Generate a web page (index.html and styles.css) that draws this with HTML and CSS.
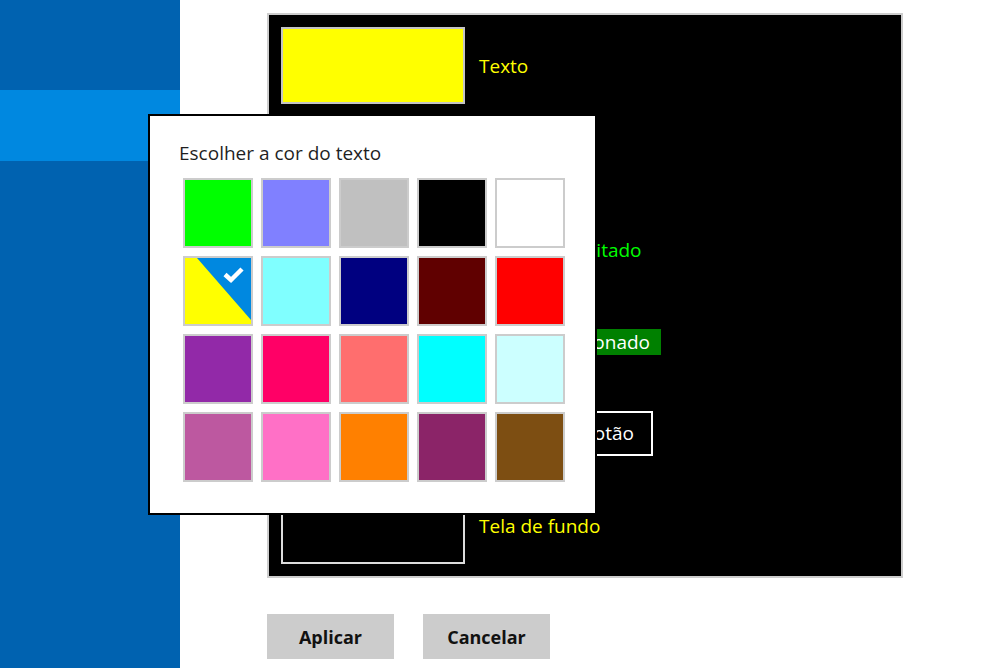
FILE: index.html
```html
<!DOCTYPE html>
<html lang="pt">
<head>
<meta charset="utf-8">
<title>Alto contraste</title>
<link rel="stylesheet" href="styles.css">
</head>
<body>
<div class="app">
  <nav class="sidebar">
    <div class="nav-item active"></div>
  </nav>
  <main class="main">
    <section class="preview">
      <div class="row">
        <div class="swatch sw-yellow"></div>
        <span class="label lbl-text">Texto</span>
      </div>
      <div class="row">
        <div class="swatch sw-link"></div>
        <span class="label lbl-link">Hiperlinks</span>
      </div>
      <div class="row">
        <div class="swatch sw-green"></div>
        <span class="label lbl-disabled">Texto desabilitado</span>
      </div>
      <div class="row">
        <div class="swatch sw-sel"></div>
        <span class="label lbl-selected">Texto selecionado</span>
      </div>
      <div class="row">
        <div class="swatch sw-white"></div>
        <span class="label lbl-button">Texto do botão</span>
      </div>
      <div class="row">
        <div class="swatch sw-black"></div>
        <span class="label lbl-text">Tela de fundo</span>
      </div>
    </section>
    <div class="actions">
      <button class="btn">Aplicar</button>
      <button class="btn">Cancelar</button>
    </div>
  </main>
</div>

<div class="flyout">
  <div class="flyout-title">Escolher a cor do texto</div>
  <div class="grid">
    <div class="cell c-00ff00"></div>
    <div class="cell c-8080ff"></div>
    <div class="cell c-c0c0c0"></div>
    <div class="cell c-000000"></div>
    <div class="cell c-ffffff"></div>

    <div class="cell c-current">
      <svg class="cur-svg" viewBox="0 0 66 66" width="66" height="66">
        <rect x="0" y="0" width="66" height="66" fill="#ffff00"/>
        <polygon points="12,0 66,0 66,62" fill="#0088e0"/>
        <polyline points="40,16.5 46,22 57,11" fill="none" stroke="#ffffff" stroke-width="4.5"/>
      </svg>
    </div>
    <div class="cell c-80ffff"></div>
    <div class="cell c-000080"></div>
    <div class="cell c-600000"></div>
    <div class="cell c-ff0000"></div>

    <div class="cell c-9229a8"></div>
    <div class="cell c-ff0066"></div>
    <div class="cell c-ff6e6e"></div>
    <div class="cell c-00ffff"></div>
    <div class="cell c-ccffff"></div>

    <div class="cell c-bd58a0"></div>
    <div class="cell c-ff70c6"></div>
    <div class="cell c-ff8000"></div>
    <div class="cell c-8b2468"></div>
    <div class="cell c-7d4e12"></div>
  </div>
</div>
</body>
</html>
```

FILE: styles.css
```css
* { box-sizing: border-box; }

html, body {
  margin: 0;
  padding: 0;
  height: 100%;
  background: #ffffff;
  font-family: "Open Sans", "Noto Sans", "Liberation Sans", sans-serif;
  overflow: hidden;
}

.app {
  display: flex;
  height: 668px;
}

.sidebar {
  width: 180px;
  flex: 0 0 180px;
  background: #0062b0;
  padding-top: 90px;
}

.nav-item {
  height: 71px;
}

.nav-item.active {
  background: #0088e0;
}

.main {
  flex: 1;
  padding: 13px 0 0 87px;
  display: flex;
  flex-direction: column;
}

.preview {
  width: 636px;
  height: 565px;
  background: #000000;
  border: 2px solid #cdcdcd;
  padding: 12px;
  display: flex;
  flex-direction: column;
  gap: 15px;
}

.row {
  display: flex;
  align-items: center;
  gap: 14px;
  height: 77px;
}

.swatch {
  width: 184px;
  height: 77px;
  flex: 0 0 184px;
  border: 2px solid #c4c4c4;
}

.sw-yellow { background: #ffff00; }
.sw-link { background: #8080ff; }
.sw-green { background: #00ff00; }
.sw-sel { background: #008000; }
.sw-white { background: #ffffff; }
.sw-black { background: #000000; border-color: #dcdcdc; }

.label {
  font-size: 19px;
  line-height: 26px;
  white-space: nowrap;
}

.lbl-text { color: #ffff00; }
.lbl-link { color: #8080ff; }
.lbl-disabled { color: #00ff00; }

.lbl-selected {
  color: #ffffff;
  background: #008000;
  padding: 0 11px 0 11px;
  line-height: 26px;
}

.lbl-button {
  color: #ffffff;
  border: 2px solid #ffffff;
  padding: 0 17px 0 19px;
  line-height: 41px;
}

.actions {
  display: flex;
  gap: 29px;
  margin-top: 36px;
}

.btn {
  width: 127px;
  height: 45px;
  border: none;
  background: #cccccc;
  color: #111111;
  font-family: "Open Sans", "Noto Sans", "Liberation Sans", sans-serif;
  font-weight: 700;
  font-size: 18px;
  padding: 0;
}

/* Flyout colour picker */
.flyout {
  position: absolute;
  left: 148px;
  top: 114px;
  width: 449px;
  height: 401px;
  background: #ffffff;
  border: 2px solid #000000;
  padding: 24px 30px 30px 33px;
}

.flyout-title {
  font-size: 19px;
  line-height: 27px;
  color: #1f1f1f;
  margin-left: -4px;
  height: 27px;
}

.grid {
  margin-top: 11px;
  display: grid;
  grid-template-columns: repeat(5, 70px);
  grid-auto-rows: 70px;
  gap: 8px;
}

.cell {
  width: 70px;
  height: 70px;
  border: 2px solid #cccccc;
}

.cur-svg { display: block; }

.c-00ff00 { background: #00ff00; }
.c-8080ff { background: #8080ff; }
.c-c0c0c0 { background: #c0c0c0; }
.c-000000 { background: #000000; }
.c-ffffff { background: #ffffff; }
.c-80ffff { background: #80ffff; }
.c-000080 { background: #000080; }
.c-600000 { background: #600000; }
.c-ff0000 { background: #ff0000; }
.c-9229a8 { background: #9229a8; }
.c-ff0066 { background: #ff0066; }
.c-ff6e6e { background: #ff6e6e; }
.c-00ffff { background: #00ffff; }
.c-ccffff { background: #ccffff; }
.c-bd58a0 { background: #bd58a0; }
.c-ff70c6 { background: #ff70c6; }
.c-ff8000 { background: #ff8000; }
.c-8b2468 { background: #8b2468; }
.c-7d4e12 { background: #7d4e12; }
```
